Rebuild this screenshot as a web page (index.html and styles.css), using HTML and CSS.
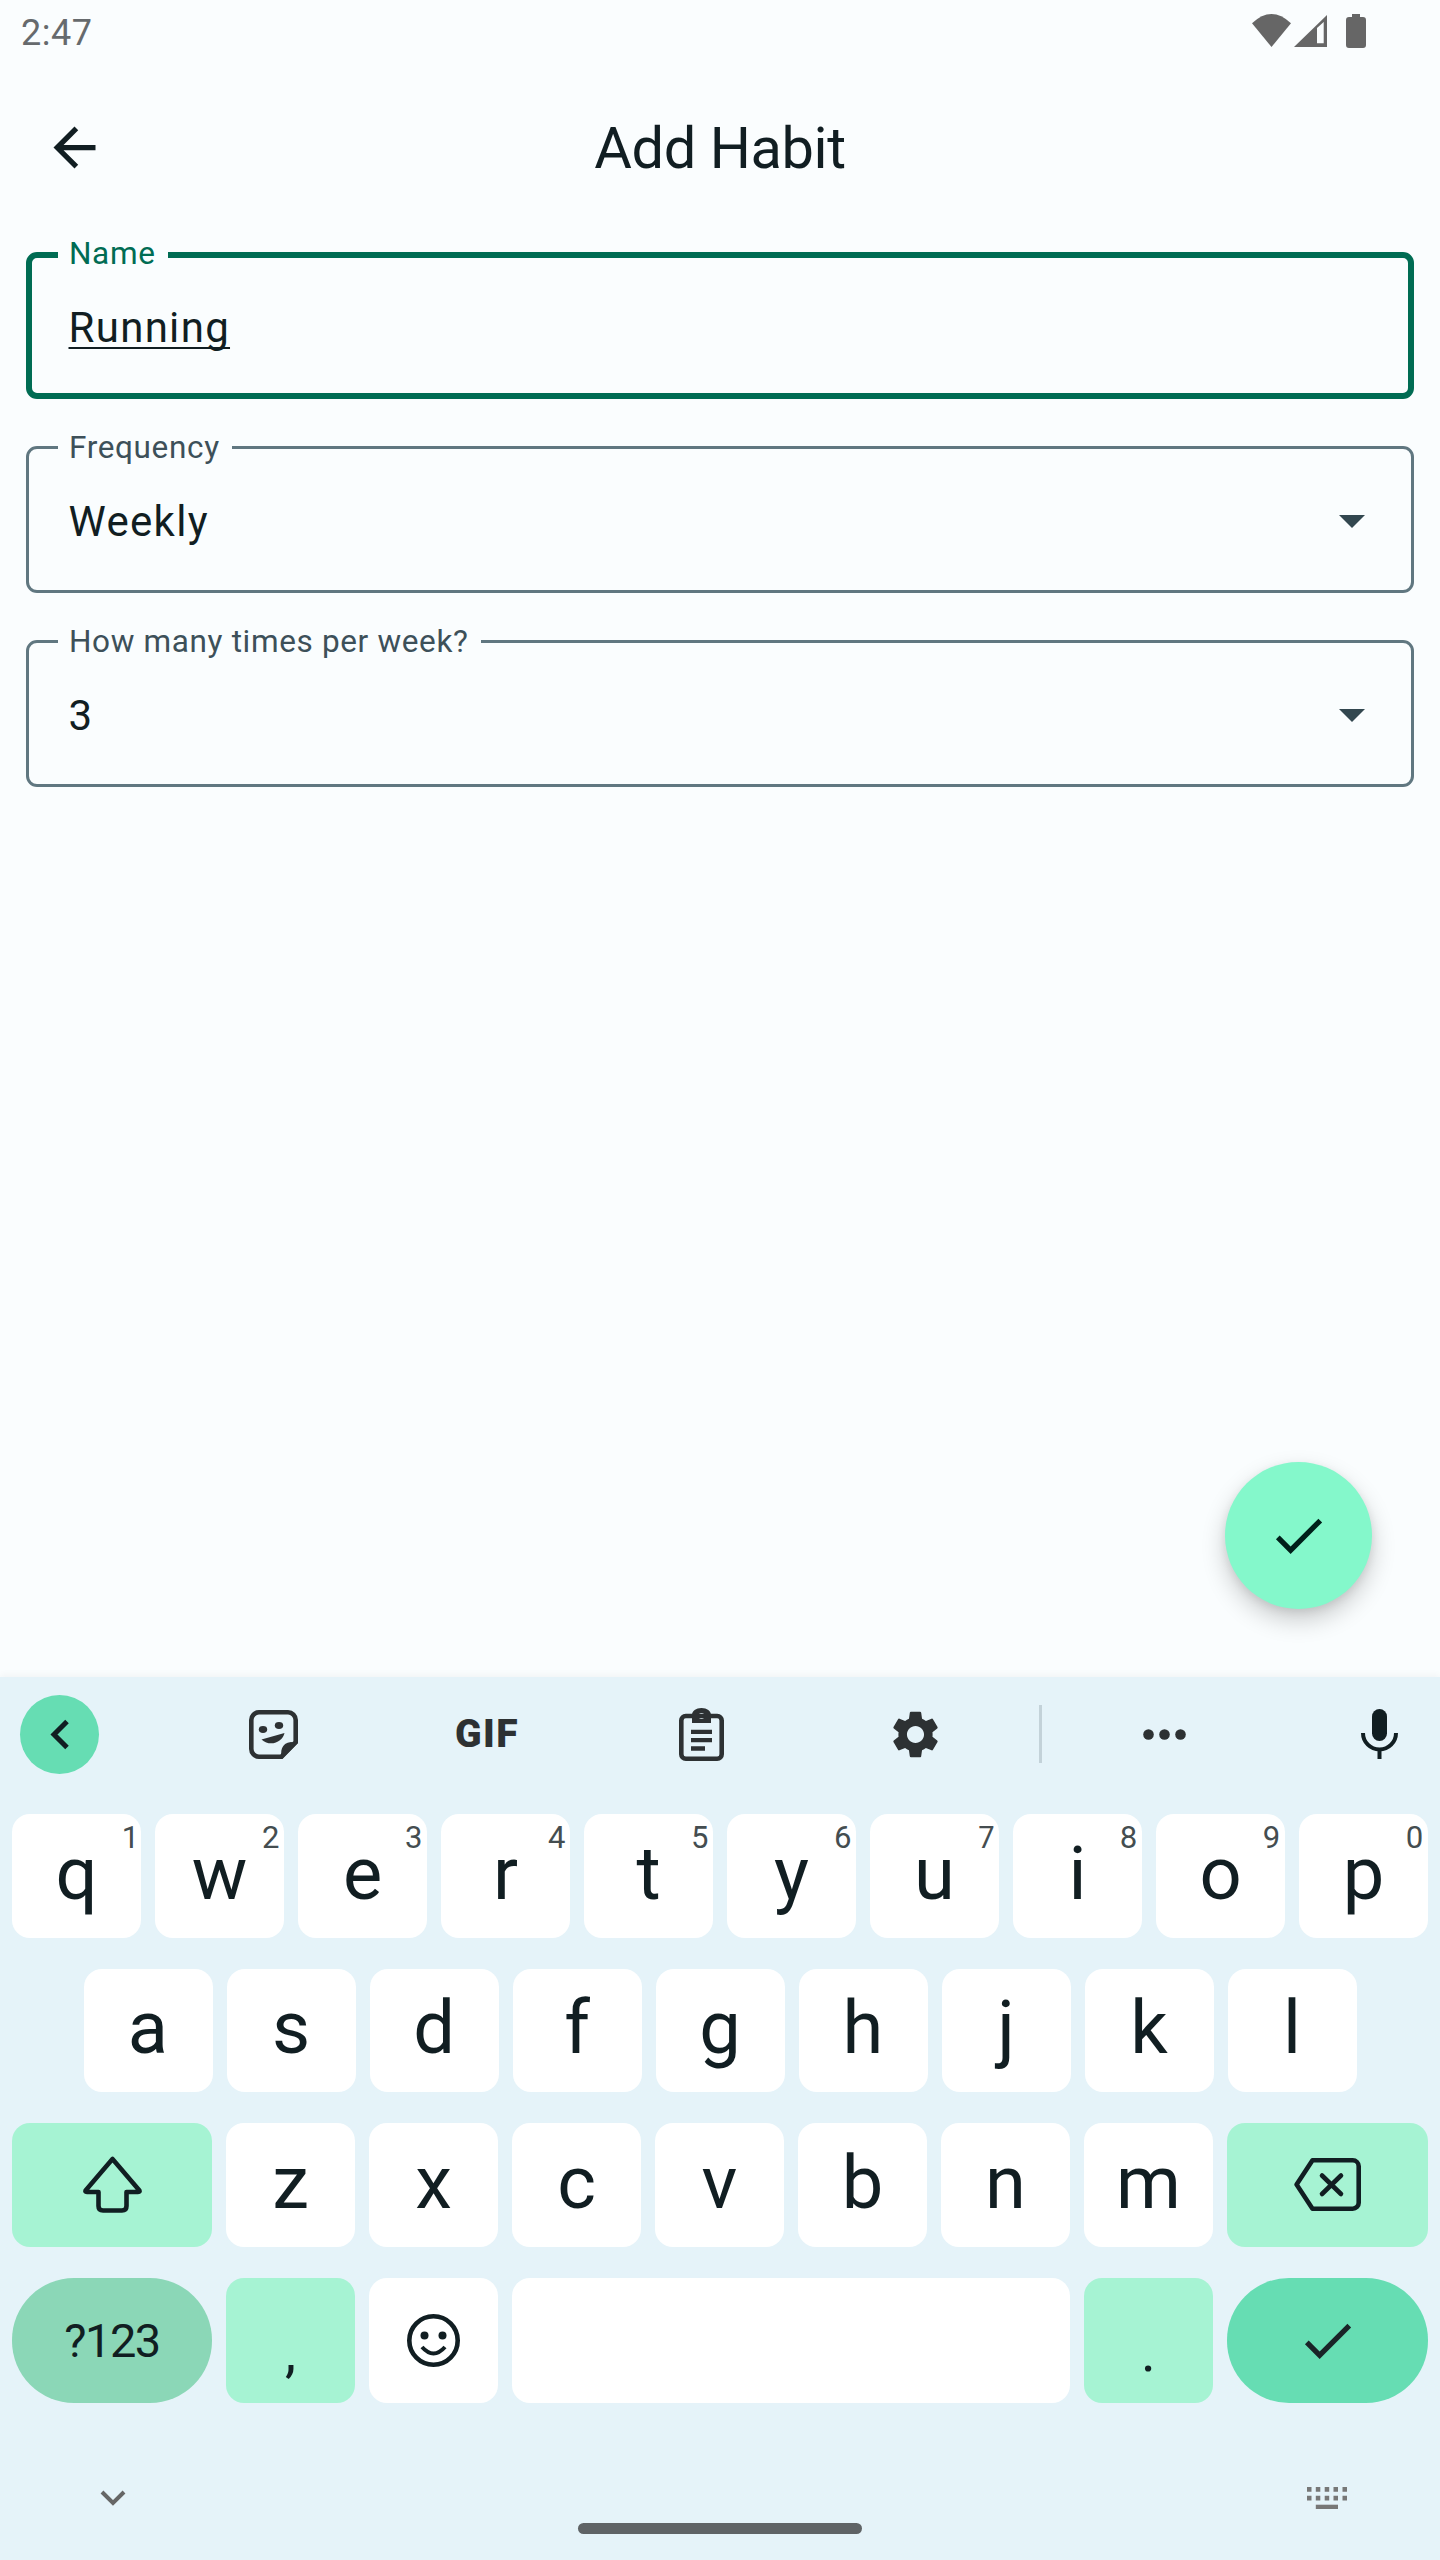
FILE: index.html
```html
<!DOCTYPE html>
<html lang="en">
<head>
<meta charset="utf-8">
<title>Add Habit</title>
<link rel="stylesheet" href="styles.css">
</head>
<body>
<div class="app">
  <div class="status">
    <span class="time">2:47</span>
    <svg class="status-icons" width="114" height="34" viewBox="0 0 114 34">
      <path d="M19.5 33L0 9.3Q19.5-9.3 39 9.3Z"/>
      <path fill-rule="evenodd" d="M42 33L75 1V33ZM65 14V29.3H71.7V8Z"/>
      <path d="M100 0H108V3H111Q114 3 114 6V31Q114 34 111 34H97Q94 34 94 31V6Q94 3 97 3H100Z"/>
    </svg>
  </div>
  <header class="topbar">
    <svg class="back" width="63" height="63" viewBox="0 0 24 24"><path d="M20 11H7.83l5.59-5.59L12 4l-8 8 8 8 1.41-1.41L7.83 13H20v-2z"/></svg>
    <h1 class="title">Add Habit</h1>
  </header>
  <main class="form">
    <div class="field field-focus">
      <span class="field-label">Name</span>
      <span class="field-value field-composing">Running</span>
    </div>
    <div class="field">
      <span class="field-label">Frequency</span>
      <span class="field-value">Weekly</span>
      <svg class="caret" width="26" height="13" viewBox="0 0 26 13"><path d="M0 0H26L13 13Z"/></svg>
    </div>
    <div class="field">
      <span class="field-label">How many times per week?</span>
      <span class="field-value">3</span>
      <svg class="caret" width="26" height="13" viewBox="0 0 26 13"><path d="M0 0H26L13 13Z"/></svg>
    </div>
  </main>
  <button class="fab" type="button" aria-label="Save">
    <svg width="63" height="63" viewBox="0 0 24 24"><path d="M9 16.17L4.83 12l-1.42 1.41L9 19 21 7l-1.41-1.41z"/></svg>
  </button>
  <section class="keyboard">
    <div class="toolbar">
      <div class="tool tool-collapse">
        <svg width="20" height="31" viewBox="0 0 20 31"><path d="M17 2.5L4 15.5L17 28.5" fill="none" stroke="#111e22" stroke-width="5"/></svg>
      </div>
      <div class="tool">
        <svg width="49" height="49" viewBox="0 0 49 49">
          <path d="M10 2.3H39A7.7 7.7 0 0 1 46.7 10V32L32.5 46.7H10A7.7 7.7 0 0 1 2.3 39V10A7.7 7.7 0 0 1 10 2.3Z" fill="none" stroke="#2d3133" stroke-width="4.6"/>
          <path d="M49 33L33 49C31 42 32 33 42 32Z" fill="#2d3133"/>
          <ellipse cx="14" cy="19.5" rx="4.2" ry="3.4" fill="#2d3133"/>
          <ellipse cx="30" cy="15.5" rx="4.2" ry="3.4" fill="#2d3133"/>
          <path d="M12.5 29.5L35.5 23C34 31 22 38 12.5 29.5Z" fill="#2d3133"/>
        </svg>
      </div>
      <div class="tool"><span class="gif">GIF</span></div>
      <div class="tool">
        <svg width="45" height="53" viewBox="0 0 45 53">
          <rect x="2.3" y="8" width="40.4" height="42.7" rx="4.5" fill="none" stroke="#2d3133" stroke-width="4.6"/>
          <path fill-rule="evenodd" d="M13 7C13 3 17 0 22.5 0S32 3 32 7V15H13ZM22.5 5A3 3 0 1 0 22.5 11A3 3 0 1 0 22.5 5Z" fill="#2d3133"/>
          <path d="M12 21.7H33V26H12ZM12 30H33V34.3H12ZM12 38.3H26V42.7H12Z" fill="#2d3133"/>
        </svg>
      </div>
      <div class="tool">
        <svg width="57" height="57" viewBox="0 0 24 24"><path fill="#2d3133" d="M19.14 12.94c.04-.3.06-.61.06-.94 0-.32-.02-.64-.07-.94l2.03-1.58c.18-.14.23-.41.12-.61l-1.92-3.32c-.12-.22-.37-.29-.59-.22l-2.39.96c-.5-.38-1.03-.7-1.62-.94l-.36-2.54c-.04-.24-.24-.41-.48-.41h-3.84c-.24 0-.43.17-.47.41l-.36 2.54c-.59.24-1.13.57-1.62.94l-2.39-.96c-.22-.08-.47 0-.59.22L2.74 8.87c-.12.21-.08.47.12.61l2.03 1.58c-.05.3-.09.63-.09.94s.02.64.07.94l-2.03 1.58c-.18.14-.23.41-.12.61l1.92 3.32c.12.22.37.29.59.22l2.39-.96c.5.38 1.03.7 1.62.94l.36 2.54c.05.24.24.41.48.41h3.84c.24 0 .44-.17.47-.41l.36-2.54c.59-.24 1.13-.56 1.62-.94l2.39.96c.22.08.47 0 .59-.22l1.92-3.32c.12-.22.07-.47-.12-.61l-2.01-1.58zM12 15.6c-1.98 0-3.6-1.62-3.6-3.6s1.62-3.6 3.6-3.6 3.6 1.62 3.6 3.6-1.62 3.6-3.6 3.6z"/></svg>
      </div>
      <div class="tool"><span class="tool-divider"></span></div>
      <div class="tool">
        <svg width="43" height="11" viewBox="0 0 43 11" fill="#2d3133"><circle cx="5.5" cy="5.5" r="5.3"/><circle cx="21.5" cy="5.5" r="5.3"/><circle cx="37.5" cy="5.5" r="5.3"/></svg>
      </div>
      <div class="tool tool-mic">
        <svg width="37" height="50" viewBox="0 0 37 50">
          <rect x="11" y="0" width="15" height="32" rx="7.5" fill="#111e22"/>
          <path d="M2 24A16.5 16.5 0 0 0 35 24M18.5 40V50" fill="none" stroke="#111e22" stroke-width="4"/>
        </svg>
      </div>
    </div>
    <div class="rows">
      <div class="row">
        <button class="key" type="button">q<span class="hint">1</span></button>
        <button class="key" type="button">w<span class="hint">2</span></button>
        <button class="key" type="button">e<span class="hint">3</span></button>
        <button class="key" type="button">r<span class="hint">4</span></button>
        <button class="key" type="button">t<span class="hint">5</span></button>
        <button class="key" type="button">y<span class="hint">6</span></button>
        <button class="key" type="button">u<span class="hint">7</span></button>
        <button class="key" type="button">i<span class="hint">8</span></button>
        <button class="key" type="button">o<span class="hint">9</span></button>
        <button class="key" type="button">p<span class="hint">0</span></button>
      </div>
      <div class="row row-home">
        <button class="key" type="button">a</button>
        <button class="key" type="button">s</button>
        <button class="key" type="button">d</button>
        <button class="key" type="button">f</button>
        <button class="key" type="button">g</button>
        <button class="key" type="button">h</button>
        <button class="key" type="button">j</button>
        <button class="key" type="button">k</button>
        <button class="key" type="button">l</button>
      </div>
      <div class="row">
        <button class="key key-wide key-mint" type="button" aria-label="Shift">
          <svg width="59" height="57" viewBox="0 0 59 57"><path d="M29.5 3L3 34Q1.5 36 4 36H15.5V50Q15.5 54.5 20 54.5H39Q43.5 54.5 43.5 50V36H55Q57.5 36 56 34Z" fill="none" stroke="#111e22" stroke-width="4.6" stroke-linejoin="round"/></svg>
        </button>
        <button class="key" type="button">z</button>
        <button class="key" type="button">x</button>
        <button class="key" type="button">c</button>
        <button class="key" type="button">v</button>
        <button class="key" type="button">b</button>
        <button class="key" type="button">n</button>
        <button class="key" type="button">m</button>
        <button class="key key-wide-end key-mint" type="button" aria-label="Backspace">
          <svg width="67" height="53" viewBox="0 0 67 53"><path d="M2.6 26.5L18.5 2.3H58.7A6 6 0 0 1 64.7 8.3V44.7A6 6 0 0 1 58.7 50.7H18.5Z" fill="none" stroke="#111e22" stroke-width="4.6" stroke-linejoin="round"/><path d="M28 17.5L47 36M47 17.5L28 36" fill="none" stroke="#111e22" stroke-width="4.6" stroke-linecap="round"/></svg>
        </button>
      </div>
      <div class="row row-bottom">
        <button class="key key-wide key-symbols" type="button">?123</button>
        <button class="key key-mint key-punct" type="button">,</button>
        <button class="key key-icon" type="button" aria-label="Emoji">
          <svg width="53" height="53" viewBox="0 0 53 53"><circle cx="26.5" cy="26.5" r="24.2" fill="none" stroke="#111e22" stroke-width="4.6"/><circle cx="17.5" cy="21.5" r="4" fill="#111e22"/><circle cx="35.5" cy="21.5" r="4" fill="#111e22"/><path d="M15 33Q26.5 46 38 33" fill="none" stroke="#111e22" stroke-width="4"/></svg>
        </button>
        <button class="key key-space" type="button" aria-label="Space"></button>
        <button class="key key-mint key-punct" type="button">.</button>
        <button class="key key-wide-end key-enter" type="button" aria-label="Done">
          <svg width="63" height="63" viewBox="0 0 24 24"><path fill="#1a2428" d="M9 16.17L4.83 12l-1.42 1.41L9 19 21 7l-1.41-1.41z"/></svg>
        </button>
      </div>
    </div>
    <div class="navbar">
      <svg class="nav-chevron" width="26" height="16" viewBox="0 0 26 16"><path d="M2 2L13 13L24 2" fill="none" stroke="#666" stroke-width="4"/></svg>
      <span class="nav-pill"></span>
      <svg class="nav-kbd" width="40" height="22" viewBox="0 0 40 22" fill="#777">
        <path d="M0 0h4.5v4.7H0zM8.8 0h4.5v4.7H8.8zM17.7 0h4.5v4.7h-4.5zM26.5 0H31v4.7h-4.5zM35.5 0H40v4.7h-4.5z"/>
        <path d="M0 8.7h4.5v4.7H0zM8.8 8.7h4.5v4.7H8.8zM17.7 8.7h4.5v4.7h-4.5zM26.5 8.7H31v4.7h-4.5zM35.5 8.7H40v4.7h-4.5z"/>
        <path d="M8.8 17.7H31V22H8.8z"/>
      </svg>
    </div>
  </section>
</div>
</body>
</html>
```
FILE: styles.css
```css
* { box-sizing: border-box; }
html, body { margin: 0; padding: 0; }
body { font-family: Roboto, "Liberation Sans", sans-serif; color: #111e22; background: #fafdfe; }
button { font: inherit; color: inherit; border: 0; padding: 0; margin: 0; }

.app {
  position: relative;
  width: 1440px;
  height: 2560px;
  display: flex;
  flex-direction: column;
  overflow: hidden;
  background: #fafdfe;
}

/* status bar */
.status {
  height: 62px;
  flex: none;
  display: flex;
  justify-content: space-between;
  padding: 0 74px 0 21px;
}
.time { font-size: 36px; line-height: 42px; margin-top: 12px; letter-spacing: .5px; color: #666a6d; }
.status-icons { margin-top: 14px; fill: #666; }

/* top bar */
.topbar {
  flex: none;
  height: 170px;
  display: grid;
  grid-template-columns: 1fr auto 1fr;
  align-items: center;
  padding: 0 43px;
}
.back { fill: #111e22; display: block; }
.title { margin: 0; padding-top: 2px; font-size: 57.75px; line-height: 70px; font-weight: 400; letter-spacing: -.4px; color: #111e22; }

/* form */
.form {
  flex: 1;
  display: flex;
  flex-direction: column;
  gap: 47px;
  padding: 20px 26px 0;
}
.field {
  --b: 3px;
  position: relative;
  height: 147px;
  display: flex;
  align-items: center;
  justify-content: space-between;
  padding: 4px 46px 0 calc(42.5px - var(--b));
  border: var(--b) solid #607780;
  border-radius: 11px;
}
.field-focus { --b: 6px; border-color: #006c53; }
.field-label {
  position: absolute;
  left: calc(32px - var(--b));
  top: calc(-14px - var(--b));
  padding: 0 12px 0 11px;
  font-size: 31.5px;
  line-height: 32px;
  letter-spacing: .65px;
  background: #fafdfe;
  color: #3d5059;
}
.field-focus .field-label { color: #006c53; }
.field-value { font-size: 42px; line-height: 50px; letter-spacing: 1.3px; color: #111e22; }
.field-composing {
  text-decoration: underline;
  text-decoration-thickness: 2px;
  text-underline-offset: 5px;
  text-decoration-skip-ink: none;
}
.caret { fill: #32474f; display: block; }

/* floating action button */
.fab {
  position: absolute;
  left: 1225px;
  top: 1462px;
  width: 147px;
  height: 147px;
  border-radius: 50%;
  background: #84f8cb;
  display: flex;
  align-items: center;
  justify-content: center;
  box-shadow: 0 11px 24px rgba(0, 0, 0, .2), 0 3px 8px rgba(0, 0, 0, .08);
}
.fab svg { fill: #00201a; }

/* keyboard */
.keyboard {
  flex: none;
  height: 883px;
  background: #e5f3f9;
  box-shadow: 0 -2px 7px rgba(0, 0, 0, .04);
  display: flex;
  flex-direction: column;
}
.toolbar {
  flex: none;
  height: 114px;
  margin-bottom: 23px;
  display: grid;
  grid-template-columns: 166px 214px 214px 214px 214px 36px 212px 1fr;
  align-items: center;
}
.tool { display: flex; align-items: center; justify-content: center; }
.tool svg { display: block; }
.tool-collapse {
  width: 79px;
  height: 79px;
  margin-left: 20px;
  border-radius: 50%;
  background: #66ddb3;
}
.tool-mic { justify-self: end; margin-right: 42px; }
.tool-divider { width: 3px; height: 58px; background: #c3d2d9; }
.gif { font-size: 39px; line-height: 28px; font-weight: 900; letter-spacing: 1.5px; color: #2d3133; }

.rows { flex: none; display: flex; flex-direction: column; gap: 31px; padding: 0 12px; }
.row { display: flex; gap: 14px; height: 123.5px; }
.row-home { padding-left: 71.5px; }
.row-bottom { height: 125px; }
.key {
  position: relative;
  flex: 0 0 129px;
  display: flex;
  align-items: center;
  justify-content: center;
  padding-bottom: 4px;
  background: #fff;
  border-radius: 18px;
  font-size: 74px;
  line-height: 1;
  color: #111e22;
}
.key svg { display: block; }
.key-icon { padding-bottom: 0; }
.key-wide { flex: 0 0 200px; padding-bottom: 0; }
.key-wide-end { flex: 0 0 201px; padding-bottom: 0; }
.key-mint { background: #a6f3d3; }
.key-symbols { background: #8bd7b7; border-radius: 62px; font-size: 47px; letter-spacing: -1.5px; }
.key-enter { background: #66ddb3; border-radius: 62px; }
.key-space { flex: 0 0 558px; }
.key-punct { font-size: 56px; padding: 24px 0 0; }
.hint {
  position: absolute;
  right: 4.5px;
  top: 6px;
  font-size: 31px;
  line-height: 36px;
  font-feature-settings: "pnum";
  color: #444d50;
}

/* navigation bar */
.navbar {
  flex: 1;
  display: grid;
  grid-template-columns: 226px 1fr 226px;
  align-items: start;
  justify-items: center;
}
.nav-chevron { margin-top: 87px; }
.nav-pill { width: 284px; height: 11px; margin-top: 120px; border-radius: 6px; background: #5f6366; }
.nav-kbd { margin-top: 84px; }
```
